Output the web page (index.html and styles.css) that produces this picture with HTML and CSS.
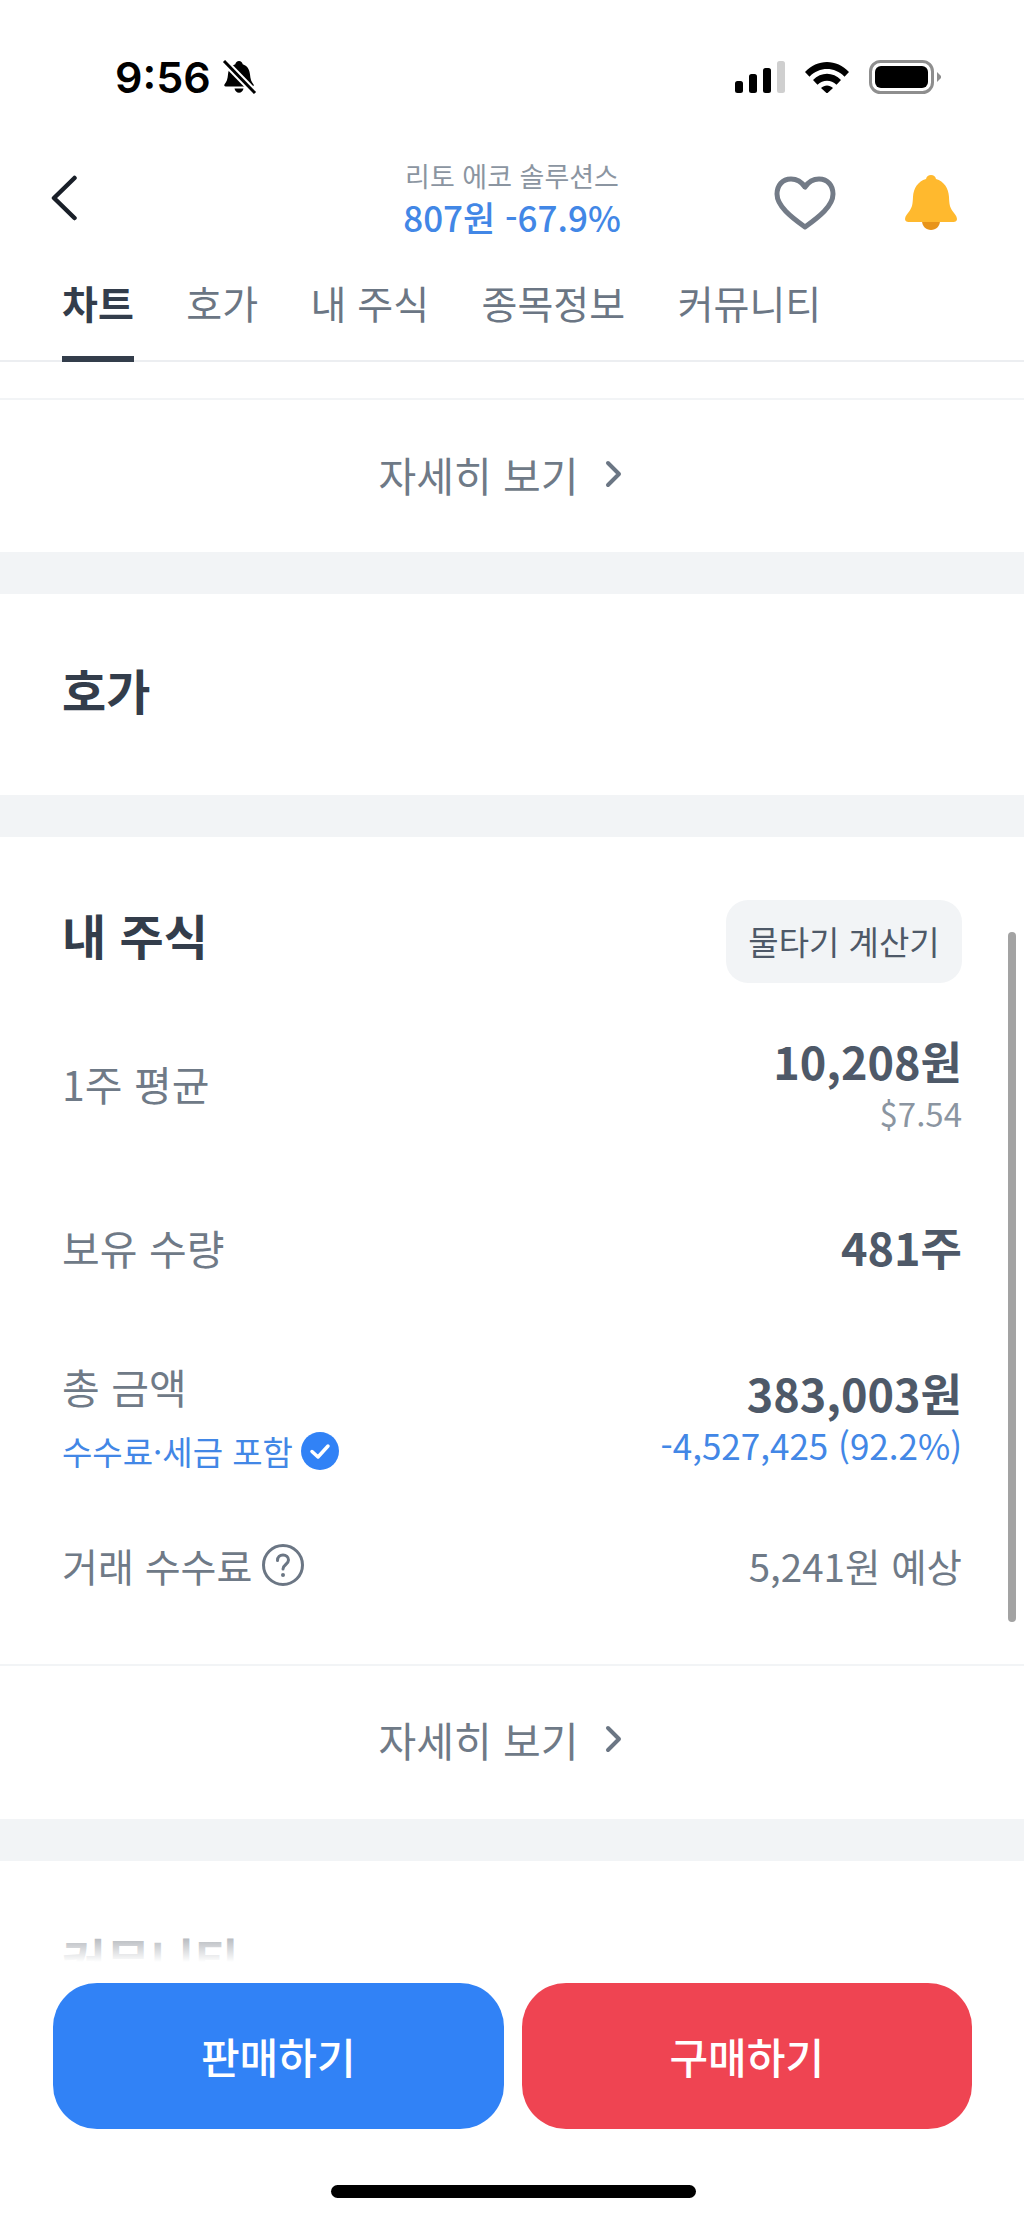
FILE: index.html

```html
<!DOCTYPE html>
<html lang="ko">
<head>
  <meta charset="UTF-8" />
  <title>리토 에코 솔루션스 - 내 주식</title>
  <link rel="stylesheet" href="styles.css">
</head>
<body>
  <div class="screen">
    <div class="status">
      <div class="status-left">
        <span class="time">9:56</span>
        <svg class="mute" width="36" height="34" viewBox="0 0 36 34">
          <path d="M18 1c2 0 3.400 1.300 3.700 3.200 4.600 1.500 6.800 5.300 7.300 10.300.4 4.500 1.300 7.300 3.400 9.800.8 1 .2 2.200-1.100 2.200H4.700c-1.300 0-1.900-1.200-1.100-2.200 2.100-2.500 3-5.300 3.400-9.800.5-5 2.700-8.800 7.300-10.300C14.600 2.300 16 1 18 1z" fill="#000"/>
          <path d="M13.500 28.500h9c-.5 2.600-2.300 4.200-4.500 4.200s-4-1.600-4.500-4.200z" fill="#000"/>
          <path d="M2 0l32 33" stroke="#fff" stroke-width="7"/>
          <path d="M3 1l31 32" stroke="#000" stroke-width="3"/>
        </svg>
      </div>
      <div class="status-right">
        <svg width="50" height="32" viewBox="0 0 50 32">
          <rect x="0" y="20" width="8" height="12" rx="2.500" fill="#000"/>
          <rect x="14" y="13" width="8" height="19" rx="2.500" fill="#000"/>
          <rect x="28" y="7" width="8" height="25" rx="2.500" fill="#000"/>
          <rect x="42" y="0" width="8" height="32" rx="2.500" fill="#cfcfcf"/>
        </svg>
        <svg width="44" height="32" viewBox="0 0 44 32">
          <path d="M0 11C12-2.500 32-2.500 44 11l-4.500 4.700C29.500 5.500 14.500 5.500 4.500 15.700z" fill="#000"/>
          <path d="M8 19c8-8.500 20-8.500 28 0l-4.500 4.700c-5.500-5.300-13.500-5.300-19 0z" fill="#000"/>
          <path d="M16 27c3.500-3.500 8.500-3.500 12 0l-6 5.500z" fill="#000"/>
        </svg>
        <svg width="72" height="34" viewBox="0 0 72 34">
          <rect x="1.500" y="1.500" width="62" height="31" rx="10" fill="none" stroke="#8e8e8e" stroke-width="3"/>
          <rect x="6" y="6" width="53" height="22" rx="6" fill="#000"/>
          <path d="M68 12l4 4v2l-4 4z" fill="#8e8e8e"/>
        </svg>
      </div>
    </div>

    <div class="topbar">
      <svg class="back" width="28" height="46" viewBox="0 0 28 46">
        <path d="M24.500 3L4 23l20.500 20" fill="none" stroke="#191f28" stroke-width="4.500" stroke-linecap="round" stroke-linejoin="round"/>
      </svg>
      <div class="stock">
        <div class="stock-name">리토 에코 솔루션스</div>
        <div class="stock-price">807원 -67.9%</div>
      </div>
      <div class="top-icons">
        <svg width="62" height="54" viewBox="0 0 62 54">
          <path d="M31 11C27 5 22 3 17 3 8 3 3 10 3 18c0 12 14 23 28 33 14-10 28-21 28-33 0-8-5-15-14-15-5 0-10 2-14 8z" fill="none" stroke="#737b87" stroke-width="5" stroke-linejoin="round"/>
        </svg>
        <svg width="54" height="56" viewBox="0 0 54 56">
          <path d="M18 46h18c0 5-4 9-9 9s-9-4-9-9z" fill="#e8941a"/>
          <path d="M27 0c2.500 0 4.500 1.500 5 4 8 2.500 12.500 9 13 18 .3 7 .8 10 3.500 14 1.500 2.200 4.500 5 4.500 8 0 2-1.500 3-3.500 3h-45C2.500 47 1 46 1 44c0-3 3-5.800 4.500-8C8.200 32 8.700 29 9 22c.5-9 5-15.500 13-18 .5-2.500 2.500-4 5-4z" fill="#ffb92e"/>
        </svg>
      </div>
    </div>

    <div class="tabs">
      <span class="tab tab-on">차트</span>
      <span class="tab">호가</span>
      <span class="tab">내 주식</span>
      <span class="tab">종목정보</span>
      <span class="tab">커뮤니티</span>
    </div>

    <div class="content">
      <section class="card card-stub">
        <div class="more">
          자세히 보기
          <svg width="20" height="28" viewBox="0 0 20 28"><path d="M4 3l11 11L4 25" fill="none" stroke="#6b7684" stroke-width="4" stroke-linecap="round" stroke-linejoin="round"/></svg>
        </div>
      </section>

      <section class="card card-hoga">
        <h2 class="card-title">호가</h2>
      </section>

      <section class="card card-mine">
        <div class="card-head">
          <h2 class="card-title">내 주식</h2>
          <span class="calc">물타기 계산기</span>
        </div>
        <div class="rows">
          <div class="row row-avg">
            <span class="label">1주 평균</span>
            <div class="vals">
              <div class="val">10,208원</div>
              <div class="usd">$7.54</div>
            </div>
          </div>
          <div class="row row-qty">
            <span class="label">보유 수량</span>
            <div class="val">481주</div>
          </div>
          <div class="row row-total">
            <div>
              <div class="label">총 금액</div>
              <div class="incl">
                수수료·세금 포함
                <svg width="38" height="38" viewBox="0 0 38 38"><circle cx="19" cy="19" r="19" fill="#3182f6"/><path d="M11 19.500l6 5.500 10-11" fill="none" stroke="#fff" stroke-width="3.500" stroke-linecap="round" stroke-linejoin="round"/></svg>
              </div>
            </div>
            <div class="vals">
              <div class="val">383,003원</div>
              <div class="loss">-4,527,425 (92.2%)</div>
            </div>
          </div>
          <div class="row row-fee">
            <div class="label label-icon">
              거래 수수료
              <svg width="42" height="42" viewBox="0 0 42 42"><circle cx="21" cy="21" r="19.500" fill="none" stroke="#6b7684" stroke-width="3"/><path d="M15.500 16.500c0-3.500 2.500-5.500 5.500-5.500s5.500 2 5.500 5c0 4.500-5.500 4.500-5.500 9" fill="none" stroke="#6b7684" stroke-width="3" stroke-linecap="round"/><circle cx="21" cy="31" r="2" fill="#6b7684"/></svg>
            </div>
            <div class="fee">5,241원 예상</div>
          </div>
        </div>
        <div class="more">
          자세히 보기
          <svg width="20" height="28" viewBox="0 0 20 28"><path d="M4 3l11 11L4 25" fill="none" stroke="#6b7684" stroke-width="4" stroke-linecap="round" stroke-linejoin="round"/></svg>
        </div>
      </section>

      <section class="card card-comm">
        <h2 class="card-title">커뮤니티</h2>
      </section>
    </div>

    <div class="scrollbar"></div>

    <div class="bottom">
      <div class="actions">
        <div class="btn btn-sell">판매하기</div>
        <div class="btn btn-buy">구매하기</div>
      </div>
      <div class="home"></div>
    </div>
  </div>
</body>
</html>
```

FILE: styles.css

```css
* {
  box-sizing: border-box;
}
html, body {
  margin: 0;
  padding: 0;
  background: #fff;
}
body {
  font-family: "Noto Sans CJK KR", sans-serif;
  color: #333d4b;
}
h2 {
  margin: 0;
}
svg {
  display: block;
  flex: none;
}
.screen {
  position: relative;
  width: 1024px;
  height: 2219px;
  overflow: hidden;
  display: flex;
  flex-direction: column;
}

/* status bar */
.status {
  height: 150px;
  padding: 60px 83px 0 115px;
  display: flex;
  justify-content: space-between;
  align-items: flex-start;
}
.status-left {
  display: flex;
  align-items: center;
  gap: 10px;
}
.time {
  font-family: "Inter", sans-serif;
  font-size: 43px;
  line-height: 34px;
  font-weight: 600;
  color: #000;
}
.status-right {
  display: flex;
  align-items: center;
  gap: 20px;
}

/* top bar */
.topbar {
  height: 90px;
  padding: 0 66px 0 50px;
  display: flex;
  align-items: center;
  justify-content: space-between;
  position: relative;
}
.back {
  margin-top: 6px;
}
.stock {
  position: absolute;
  left: 0;
  right: 0;
  margin-top: 6px;
  text-align: center;
}
.stock-name {
  font-size: 27px;
  line-height: 38px;
  color: #8b95a1;
}
.stock-price {
  font-size: 35px;
  line-height: 44px;
  font-weight: 500;
  color: #4287e6;
}
.top-icons {
  display: flex;
  align-items: center;
  gap: 68px;
  margin-top: 16px;
}

/* tabs */
.tabs {
  height: 122px;
  padding: 28px 0 0 62px;
  display: flex;
  gap: 52.5px;
  border-bottom: 2px solid #eceef1;
}
.tab {
  height: 94px;
  font-size: 39px;
  line-height: 68px;
  color: #6b7684;
}
.tab-on {
  font-weight: 700;
  color: #333d4b;
  border-bottom: 6px solid #333d4b;
}

/* scrolling content */
.content {
  background: #f2f4f6;
  flex: 1;
  display: flex;
  flex-direction: column;
  gap: 42px;
}
.card {
  background: #fff;
}
.card-stub {
  height: 190px;
  padding-top: 36px;
}
.card-hoga {
  height: 201px;
  padding: 64px 62px 0;
}
.card-mine {
  height: 982px;
  padding-top: 63px;
}
.card-comm {
  flex: 1;
  padding: 66px 62px 0;
}
.card-title {
  font-size: 48px;
  line-height: 62px;
  font-weight: 700;
  color: #333d4b;
}
.card-head {
  display: flex;
  justify-content: space-between;
  align-items: center;
  height: 83px;
  padding: 0 62px;
}
.card-head .card-title {
  margin-top: -16px;
}
.calc {
  width: 236px;
  height: 83px;
  border-radius: 22px;
  background: #f2f4f6;
  font-size: 33px;
  line-height: 83px;
  text-align: center;
  color: #4e5968;
}
.rows {
  padding: 0 62px;
}
.row {
  display: flex;
  justify-content: space-between;
}
.row-avg {
  height: 100px;
  margin-top: 50px;
  align-items: center;
}
.row-qty {
  height: 60px;
  margin-top: 84px;
  align-items: center;
}
.row-total {
  height: 112px;
  margin-top: 81px;
}
.row-fee {
  height: 52px;
  margin-top: 69px;
  align-items: center;
}
.label {
  font-size: 41px;
  line-height: 56px;
  color: #6f7a87;
}
.label-icon {
  display: flex;
  align-items: center;
  gap: 10px;
  font-size: 39px;
}
.vals {
  text-align: right;
}
.val {
  font-size: 45px;
  line-height: 56px;
  font-weight: 700;
  color: #4e5968;
}
.usd {
  margin-top: 4px;
  font-size: 33px;
  line-height: 40px;
  color: #8b95a1;
}
.incl {
  display: flex;
  align-items: center;
  gap: 8px;
  margin-top: 17px;
  font-size: 33px;
  line-height: 40px;
  color: #4287e6;
}
.row-total .vals {
  padding-top: 7px;
}
.loss {
  margin-top: 2px;
  font-size: 35px;
  line-height: 44px;
  color: #4287e6;
}
.fee {
  font-size: 38.5px;
  color: #6f7a87;
}
.more {
  display: flex;
  align-items: center;
  justify-content: center;
  gap: 25px;
  height: 148px;
  padding-right: 22px;
  border-top: 2px solid #f2f4f6;
  font-size: 41px;
  color: #6f7a87;
}
.rows + .more {
  margin-top: 73px;
}
.card-stub .more {
  height: 150px;
}

/* overlays */
.scrollbar {
  position: absolute;
  top: 932px;
  right: 8px;
  width: 8px;
  height: 690px;
  border-radius: 4px;
  background: #a3a3a3;
}
.bottom {
  position: absolute;
  left: 0;
  right: 0;
  bottom: 0;
  height: 304px;
  padding: 68px 52px 0 53px;
  background: linear-gradient(to bottom, rgba(255,255,255,.3) 0, #fff 47px);
}
.actions {
  display: flex;
  gap: 18px;
}
.btn {
  flex: 1;
  height: 146px;
  border-radius: 44px;
  font-size: 42px;
  line-height: 146px;
  font-weight: 500;
  text-align: center;
  color: #fff;
}
.btn-sell {
  background: #3182f6;
}
.btn-buy {
  background: #ef4452;
}
.home {
  width: 365px;
  height: 13px;
  margin: 56px auto 0 278px;
  border-radius: 7px;
  background: #000;
}
```
